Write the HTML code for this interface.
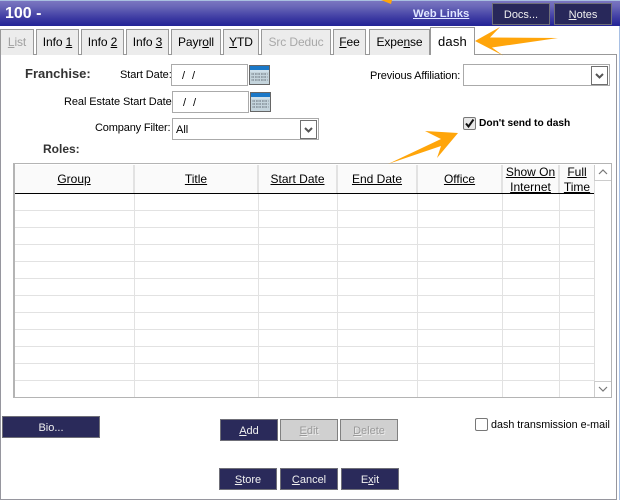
<!DOCTYPE html>
<html><head><meta charset="utf-8">
<style>
html,body{margin:0;padding:0;background:#fff}
#p{position:relative;width:620px;height:500px;overflow:hidden;background:#fff;font-family:"Liberation Sans",sans-serif;font-size:12px;color:#000}
#p div{position:absolute;box-sizing:border-box}
.t{white-space:nowrap;line-height:14px}
.l{font-size:11px;letter-spacing:-.08px}
.tab{top:29px;height:26px;background:#ececec;border:1px solid #999;border-bottom:none;text-align:center;line-height:25px;font-size:12px;letter-spacing:-.1px;white-space:nowrap}
.in{background:#fff;border:1px solid #aaa}
.btn{background:#2a2a5a;border:1px solid #6f6f78;color:#f0f0f0;text-align:center;font-size:11px;height:22px;line-height:22px;white-space:nowrap}
.dis{background:#d0d0d0;border:1px solid #808080;color:#999;text-shadow:1px 1px 0 #eee}
.hd{top:165px;height:28px;background:#fafafa;border-right:2px solid #e2e2e2;text-align:center;text-decoration:underline;line-height:28px;font-size:12px;white-space:nowrap}
.hd2{line-height:15px}
.dd{width:17px;height:19px;border:1px solid #707070;background:#fff}
.r{left:15px;width:579px;height:1px;background:#e2e2e2}
.c{top:194px;height:203px;width:1px;background:#e2e2e2}
.cal{width:21px;height:20px;border:1px solid #666;background:#c4d4dc}
</style></head><body>
<div id="p">
<div style="left:0;top:0;width:620px;height:26px;background:linear-gradient(#7d78c2,#6a67b8 25%,#3c3aa2 70%,#232496)"></div>
<div style="left:0;top:0;width:620px;height:1px;background:#a8bfe0"></div>
<div class="t" style="left:5px;top:7px;color:#fff;font-size:16px;font-weight:bold">100 -</div>
<div class="t" style="left:413px;top:7px;color:#dfe6ff;font-size:11.300px;font-weight:bold;text-decoration:underline">Web Links</div>
<div class="btn" style="left:492px;top:3px;width:58px;height:22px;background:#28285a">Docs...</div>
<div class="btn" style="left:554px;top:3px;width:58px;height:22px;background:#28285a"><u>N</u>otes</div>

<div style="left:0;top:54px;width:617px;height:446px;border:1px solid #96969e;border-top:1px solid #999"></div>
<div style="left:619px;top:26px;width:1px;height:474px;background:#a8c0e4"></div>

<div class="tab" style="left:0;width:34px;color:#a0a0a0"><u>L</u>ist</div>
<div class="tab" style="left:36px;width:43px">Info <u>1</u></div>
<div class="tab" style="left:81px;width:43px">Info <u>2</u></div>
<div class="tab" style="left:126px;width:43px">Info <u>3</u></div>
<div class="tab" style="left:171px;width:50px">Payr<u>o</u>ll</div>
<div class="tab" style="left:223px;width:36px"><u>Y</u>TD</div>
<div class="tab" style="left:261px;width:70px;color:#a8a8a8">Src Deduc</div>
<div class="tab" style="left:333px;width:33px"><u>F</u>ee</div>
<div class="tab" style="left:369px;width:61px">Expe<u>n</u>se</div>
<div class="tab" style="left:430px;top:27px;width:45px;height:28px;background:#fff;line-height:27px;letter-spacing:.2px;font-size:13px">dash</div>

<div class="t" style="left:25px;top:67px;font-size:13px;font-weight:bold;color:#333">Franchise:</div>
<div class="t l" style="left:120px;top:68px">Start Date:</div>
<div class="in" style="left:171px;top:64px;width:77px;height:22px"></div>
<div class="t l" style="left:182px;top:69px;letter-spacing:7px">//</div>
<div class="cal" style="left:249px;top:65px"><svg width="19" height="18" style="position:absolute;left:0;top:0"><rect width="19" height="4" fill="#1a78c8"/><rect y="4" width="19" height="2" fill="#cfe0ea"/><path d="M1 8h17M1 11h17M1 14h17" stroke="#8c98a0" stroke-dasharray="1 1"/><path d="M3 7v9M6 7v9M9 7v9M12 7v9M15 7v9" stroke="#7f8b94" stroke-dasharray="2 1"/></svg></div>
<div class="t l" style="left:64px;top:95px">Real Estate Start Date:</div>
<div class="in" style="left:172px;top:91px;width:77px;height:22px"></div>
<div class="t l" style="left:183px;top:96px;letter-spacing:7px">//</div>
<div class="cal" style="left:250px;top:92px"><svg width="19" height="18" style="position:absolute;left:0;top:0"><rect width="19" height="4" fill="#1a78c8"/><rect y="4" width="19" height="2" fill="#cfe0ea"/><path d="M1 8h17M1 11h17M1 14h17" stroke="#8c98a0" stroke-dasharray="1 1"/><path d="M3 7v9M6 7v9M9 7v9M12 7v9M15 7v9" stroke="#7f8b94" stroke-dasharray="2 1"/></svg></div>
<div class="t l" style="left:95px;top:121px;letter-spacing:-.15px">Company Filter:</div>
<div class="in" style="left:172px;top:118px;width:147px;height:22px"></div>
<div class="t" style="left:176px;top:123px;font-size:11px">All</div>
<div class="dd" style="left:300px;top:120px"><svg width="15" height="17" style="position:absolute;left:0;top:0"><path d="M4 7l3.500 3.500L11 7" fill="none" stroke="#555" stroke-width="2"/></svg></div>
<div class="t" style="left:43px;top:142px;font-size:12px;font-weight:bold;color:#333">Roles:</div>

<div class="t l" style="left:370px;top:69px;letter-spacing:-.12px">Previous Affiliation:</div>
<div class="in" style="left:463px;top:64px;width:147px;height:22px"></div>
<div class="dd" style="left:591px;top:66px"><svg width="15" height="17" style="position:absolute;left:0;top:0"><path d="M4 7l3.500 3.500L11 7" fill="none" stroke="#555" stroke-width="2"/></svg></div>

<div style="left:463px;top:117px;width:13px;height:13px;border:1px solid #777;background:#e8e8e8;border-radius:2px"><svg width="11" height="11" style="position:absolute;left:0;top:0"><path d="M2 5.500l2.500 3L9.500 1.500" fill="none" stroke="#111" stroke-width="2"/></svg></div>
<div class="t" style="left:479px;top:117px;font-size:10.200px;font-weight:bold">Don't send to dash</div>

<div style="left:13px;top:163px;width:599px;height:235px;border:2px solid #b4b4b4;border-width:1px 1px 1px 2px;background:#fff"></div>
<div class="hd" style="left:15px;width:120px">Group</div>
<div class="hd" style="left:135px;width:124px">Title</div>
<div class="hd" style="left:259px;width:79px">Start Date</div>
<div class="hd" style="left:338px;width:80px">End Date</div>
<div class="hd" style="left:418px;width:85px">Office</div>
<div class="hd hd2" style="left:503px;width:57px">Show On<br>Internet</div>
<div class="hd hd2" style="left:560px;width:34px;border-right:none">Full<br>Time</div>
<div style="left:15px;top:193px;width:579px;height:1px;background:#000"></div>

<div class="r" style="top:210px"></div><div class="r" style="top:227px"></div><div class="r" style="top:244px"></div><div class="r" style="top:261px"></div><div class="r" style="top:278px"></div><div class="r" style="top:295px"></div><div class="r" style="top:312px"></div><div class="r" style="top:329px"></div><div class="r" style="top:346px"></div><div class="r" style="top:363px"></div><div class="r" style="top:380px"></div>
<div class="c" style="left:134px"></div><div class="c" style="left:258px"></div><div class="c" style="left:337px"></div><div class="c" style="left:417px"></div><div class="c" style="left:502px"></div><div class="c" style="left:559px"></div>

<div style="left:594px;top:165px;width:17px;height:16px;border-left:1px solid #ccc;border-bottom:1px solid #ccc"><svg width="16" height="15" style="position:absolute;left:0;top:0"><path d="M4 9l4-4 4 4" fill="none" stroke="#777" stroke-width="1.200"/></svg></div>
<div style="left:594px;top:181px;width:1px;height:200px;background:#ddd"></div>
<div style="left:594px;top:381px;width:17px;height:16px;border-left:1px solid #ccc;border-top:1px solid #ccc"><svg width="16" height="15" style="position:absolute;left:0;top:0"><path d="M4 5l4 4 4-4" fill="none" stroke="#777" stroke-width="1.200"/></svg></div>

<div class="btn" style="left:2px;top:416px;width:98px">Bio...</div>
<div class="btn" style="left:220px;top:419px;width:58px"><u>A</u>dd</div>
<div class="btn dis" style="left:280px;top:419px;width:58px"><u>E</u>dit</div>
<div class="btn dis" style="left:340px;top:419px;width:58px"><u>D</u>elete</div>
<div style="left:475px;top:418px;width:13px;height:13px;border:1px solid #777;border-radius:2px;background:#fff"></div>
<div class="t" style="left:491px;top:418px;font-size:10.750px">dash transmission e-mail</div>
<div class="btn" style="left:219px;top:468px;width:58px"><u>S</u>tore</div>
<div class="btn" style="left:280px;top:468px;width:58px"><u>C</u>ancel</div>
<div class="btn" style="left:341px;top:468px;width:58px">E<u>x</u>it</div>

<svg width="620" height="500" style="position:absolute;left:0;top:0;pointer-events:none">
<path d="M475 41L500 27 490 37.500 558 38 492 47.500 503 55.500Z" fill="#ffa50a"/>
<path d="M381 0L392 0 391 4Z" fill="#ffa50a"/>
<path d="M458 133L425 131 441 139 388 164 441 146 437 158Z" fill="#ffa50a"/>
</svg>
</div>
</body></html>
